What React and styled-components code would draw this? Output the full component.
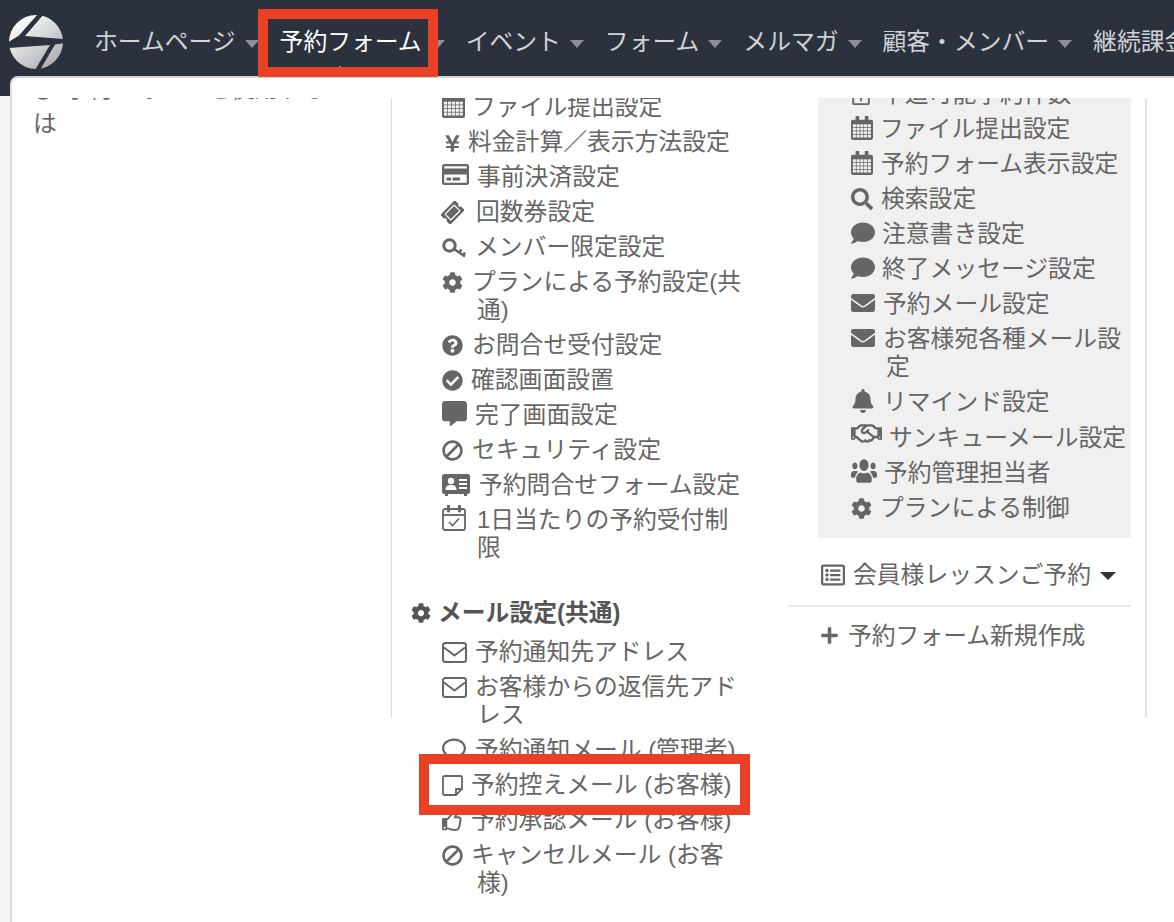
import React from "react";
import styled, { createGlobalStyle } from "styled-components";
import {
  FaYenSign, FaRegCreditCard, FaTicketAlt, FaCog, FaQuestionCircle, FaCheckCircle,
  FaCommentAlt, FaBan, FaRegComment,
  FaRegThumbsUp, FaSearch, FaComment, FaEnvelope, FaBell,
  FaRegHandshake, FaUsers, FaRegListAlt, FaPlus, FaRegCalendarPlus, FaRegDotCircle,
} from "react-icons/fa";

const Global = createGlobalStyle`
  html, body { margin: 0; padding: 0; background: #f5f5f5; }
  * { box-sizing: border-box; }
  body { font-family: "Liberation Sans", "Noto Sans CJK JP", sans-serif; }
`;

const Page = styled.div`
  position: relative;
  width: 1174px;
  height: 922px;
  overflow: hidden;
  font-size: 23.8px;
  color: #666;
`;

const Header = styled.header`
  display: flex;
  align-items: flex-start;
  height: 96px;
  padding: 15px 0 0 9px;
  background: #2b323e;
  overflow: hidden;
`;

const Nav = styled.nav`
  display: flex;
  align-items: center;
  height: 54px;
  margin-left: 31px;
  white-space: nowrap;
`;

const NavItem = styled.div`
  display: flex;
  align-items: center;
  flex: none;
  padding-right: 21px;
  line-height: 28px;
  color: ${(p) => (p.$active ? "#ffffff" : "#cfd2d6")};
`;

const Caret = styled.span`
  width: 0;
  height: 0;
  margin: 3px 0 0 9px;
  border-left: 7.5px solid transparent;
  border-right: 7.5px solid transparent;
  border-top: 8px solid #8b8f96;
`;

const Panel = styled.div`
  position: absolute;
  top: 76px;
  left: 10px;
  right: 0;
  bottom: 0;
  display: flex;
  padding-top: 20px;
  background: #fff;
  border-top: 2px solid #d4d5d7;
  border-left: 2px solid #dcdcdc;
  border-top-left-radius: 8px;

  &::before {
    content: "";
    position: absolute;
    top: -12px;
    left: 317px;
    border-left: 11px solid transparent;
    border-right: 11px solid transparent;
    border-bottom: 11px solid #fff;
  }
`;

const Columns = styled.div`
  flex: 1;
  display: flex;
  align-items: flex-start;
  overflow: hidden;
  height: 824px;
`;

const LeftColumn = styled.div`
  flex: none;
  width: 380px;
  height: 620px;
  padding: 0 25px 0 21px;
  border-right: 1px solid #dedede;
`;

const GuideText = styled.div`
  margin-top: -25px;
  line-height: 32px;
`;

const GuideIcon = styled.span`
  display: inline-block;
  width: 32px;
  vertical-align: -3px;
`;

const MiddleColumn = styled.div`
  flex: none;
  width: 396px;
  padding: 0 43px 0 19px;
`;

const RowList = styled.div`
  margin-top: ${(p) => p.$top || 0}px;
  padding-left: ${(p) => p.$left || 0}px;
`;

const Row = styled.div`
  margin-bottom: 7px;
  padding-left: 35px;
  text-indent: -35px;
  line-height: 28px;
`;

const IconSlot = styled.span`
  display: inline-flex;
  align-items: center;
  width: ${(p) => p.$w}px;
  height: 20px;
  text-indent: 0;
  vertical-align: -3px;
  color: #666;
`;

const MailHeading = styled.div`
  display: flex;
  align-items: center;
  margin: 37px 0 11px;
  font-weight: 700;
  line-height: 28px;
  color: #555;
`;

const HeadingIcon = styled.span`
  display: flex;
  width: 27px;
`;

const RightColumn = styled.div`
  flex: none;
  width: 359px;
  height: 620px;
  padding-right: 14px;
  border-right: 2px solid #e4e4e4;
`;

const SettingsBox = styled.div`
  margin-left: 30px;
  padding: 0 0 9px 33px;
  background: #f0f0f0;
  overflow: hidden;
`;

const ActionRow = styled.div`
  display: flex;
  align-items: center;
  line-height: 28px;
  padding-left: ${(p) => p.$left}px;
  margin-top: ${(p) => p.$top}px;
`;

const ActionIcon = styled.span`
  display: flex;
  width: ${(p) => p.$w}px;
`;

const DarkCaret = styled.span`
  width: 0;
  height: 0;
  margin: 3px 0 0 9px;
  border-left: 8px solid transparent;
  border-right: 8px solid transparent;
  border-top: 8px solid #333;
`;

const Divider = styled.hr`
  height: 2px;
  margin: 16px 0 0;
  border: 0;
  background: #e6e6e6;
`;

const Highlight = styled.div`
  position: absolute;
  left: ${(p) => p.$x}px;
  top: ${(p) => p.$y}px;
  width: ${(p) => p.$w}px;
  height: ${(p) => p.$h}px;
  border: 10px solid #e94026;
  pointer-events: none;
`;

const Logo = () => (
  <svg width="54" height="54" viewBox="0 0 54 54" style={{ flex: "none" }}>
    <defs>
      <linearGradient id="lg" x1="0.15" y1="0.1" x2="0.85" y2="0.95">
        <stop offset="0" stopColor="#ffffff" />
        <stop offset="1" stopColor="#a9abae" />
      </linearGradient>
    </defs>
    <circle cx="27" cy="27" r="27" fill="url(#lg)" />
    <polygon
      fill="#2b323e"
      points="29,-1 35,-1 16,21 55,24 55,28 46,29.5 31,55 26,55 41,30 -1,33 -1,27.5 10,20.5"
    />
  </svg>
);

const Calendar = ({ size = 24 }) => (
  <svg width={size} height={size + 2} viewBox="0 0 24 26" style={{ flex: "none" }}>
    <path fill="#666" d="M5 1a2 2 0 0 1 4 0v3h6V1a2 2 0 0 1 4 0v3h3a2 2 0 0 1 2 2v18a2 2 0 0 1-2 2H2a2 2 0 0 1-2-2V6a2 2 0 0 1 2-2h3z" />
    <g fill="#f3f3f3">
      {[0, 1, 2, 3].map((r) =>
        [0, 1, 2, 3, 4].map((c) => (
          <rect key={`${r}${c}`} x={2 + c * 4.1} y={9 + r * 3.8} width="3.3" height="3" />
        ))
      )}
    </g>
  </svg>
);

const CalendarCheck = () => (
  <svg width="24" height="26" viewBox="0 0 24 26" style={{ flex: "none" }}>
    <rect x="1" y="4" width="22" height="21" rx="2" fill="none" stroke="#666" strokeWidth="1.8" />
    <path d="M1 10h22" stroke="#666" strokeWidth="1.8" />
    <path d="M6.5 1v5M17.5 1v5" stroke="#666" strokeWidth="3" strokeLinecap="round" />
    <path d="M7 17l3.5 3.5L17 13.5" fill="none" stroke="#666" strokeWidth="1.6" />
  </svg>
);

const StickyNote = () => (
  <svg width="21" height="21" viewBox="0 0 21 21" style={{ flex: "none" }}>
    <path d="M2.5 1h16a1.5 1.5 0 0 1 1.5 1.5V14l-6 6H2.5A1.5 1.5 0 0 1 1 18.5v-16A1.5 1.5 0 0 1 2.5 1z" fill="none" stroke="#666" strokeWidth="1.8" />
    <path d="M14 20v-6h6" fill="none" stroke="#666" strokeWidth="1.8" />
  </svg>
);

const IdCard = () => (
  <svg width="28" height="22" viewBox="0 0 28 22" style={{ flex: "none" }}>
    <rect width="28" height="20" y="0" rx="2.5" fill="#666" />
    <path d="M3 20h3v2H3zM22 20h3v2h-3z" fill="#666" />
    <circle cx="9" cy="7" r="3.2" fill="#fff" />
    <path d="M3.5 16c0-4 2-5 5.5-5s5.5 1 5.5 5z" fill="#fff" />
    <path d="M17 6h8M17 10h8M17 14h8" stroke="#fff" strokeWidth="2" />
  </svg>
);

const Key = () => (
  <svg width="25" height="20" viewBox="0 0 25 20" style={{ flex: "none" }}>
    <circle cx="7.5" cy="7.5" r="5.7" fill="none" stroke="#666" strokeWidth="3" />
    <path d="M12 11l11 7.5M17 15l2.5-3.5M21 17.5l2-3" fill="none" stroke="#666" strokeWidth="2.6" />
  </svg>
);

const Ticket = () => (
  <FaTicketAlt size={21} style={{ flex: "none", transform: "rotate(-45deg)" }} />
);

const Yen = () => (
  <FaYenSign size={19} style={{ flex: "none", transform: "scaleX(1.1)", transformOrigin: "left" }} />
);

const Envelope = () => (
  <svg width="25" height="21" viewBox="0 0 25 21" style={{ flex: "none" }}>
    <rect x="1" y="1" width="23" height="19" rx="2.5" fill="none" stroke="#666" strokeWidth="2" />
    <path d="M2 5.5l10.5 8 10.5-8" fill="none" stroke="#666" strokeWidth="2" />
  </svg>
);

const Ban = () => (
  <FaBan size={21} style={{ flex: "none", transform: "scaleX(-1)" }} />
);

const Users = () => (
  <FaUsers size={26} style={{ flex: "none", transform: "scaleY(1.3)" }} />
);

const nav = [
  ["ホームページ"],
  ["予約フォーム", true],
  ["イベント"],
  ["フォーム"],
  ["メルマガ"],
  ["顧客・メンバー"],
  ["継続課金"],
];

const middleTop = [
  [<Calendar size={23} />, 30, "ファイル提出設定"],
  [<Yen />, 26, "料金計算／表示方法設定"],
  [<FaRegCreditCard size={27} />, 35, "事前決済設定"],
  [<Ticket />, 34, "回数券設定"],
  [<Key />, 33, "メンバー限定設定"],
  [<FaCog size={21} />, 30, "プランによる予約設定(共通)"],
  [<FaQuestionCircle size={21} />, 30, "お問合せ受付設定"],
  [<FaCheckCircle size={21} />, 29, "確認画面設置"],
  [<FaCommentAlt size={25} />, 33, "完了画面設定"],
  [<Ban />, 30, "セキュリティ設定"],
  [<IdCard />, 37, "予約問合せフォーム設定"],
  [<CalendarCheck />, 35, "1日当たりの予約受付制限"],
];

const middleMail = [
  [<Envelope />, 33, "予約通知先アドレス"],
  [<Envelope />, 33, "お客様からの返信先アドレス"],
  [<FaRegComment size={24} />, 33, "予約通知メール (管理者)"],
  [<StickyNote />, 29, "予約控えメール (お客様)"],
  [<FaRegThumbsUp size={21} />, 29, "予約承認メール (お客様)"],
  [<Ban />, 29, "キャンセルメール (お客様)"],
];

const right = [
  [<FaRegCalendarPlus size={20} />, 30, "半追可能予約件数"],
  [<Calendar size={22} />, 29, "ファイル提出設定"],
  [<Calendar size={22} />, 30, "予約フォーム表示設定"],
  [<FaSearch size={22} />, 30, "検索設定"],
  [<FaComment size={24} />, 31, "注意書き設定"],
  [<FaComment size={24} />, 31, "終了メッセージ設定"],
  [<FaEnvelope size={24} />, 32, "予約メール設定"],
  [<FaEnvelope size={24} />, 32, "お客様宛各種メール設定"],
  [<FaBell size={24} />, 32, "リマインド設定"],
  [<FaRegHandshake size={31} />, 38, "サンキューメール設定"],
  [<Users />, 33, "予約管理担当者"],
  [<FaCog size={21} />, 29, "プランによる制御"],
];

const Rows = ({ items }) =>
  items.map(([icon, w, label]) => (
    <Row key={label}>
      <IconSlot $w={w}>{icon}</IconSlot>
      {label}
    </Row>
  ));

export default function App() {
  return (
    <Page>
      <Global />
      <Header>
        <Logo />
        <Nav>
          {nav.map(([label, active]) => (
            <NavItem key={label} $active={active}>
              {label}
              <Caret />
            </NavItem>
          ))}
        </Nav>
      </Header>
      <Panel>
        <Columns>
          <LeftColumn>
            <GuideText>
              <GuideIcon>
                <FaRegDotCircle size={20} />
              </GuideIcon>
              予約フォームを使用するには
            </GuideText>
          </LeftColumn>
          <MiddleColumn>
            <RowList $top={-5} $left={31}>
              <Rows items={middleTop} />
            </RowList>
            <MailHeading>
              <HeadingIcon>
                <FaCog size={20} />
              </HeadingIcon>
              メール設定(共通)
            </MailHeading>
            <RowList $left={31}>
              <Rows items={middleMail} />
            </RowList>
          </MiddleColumn>
          <RightColumn>
            <SettingsBox>
              <RowList $top={-18}>
                <Rows items={right} />
              </RowList>
            </SettingsBox>
            <ActionRow $left={33} $top={23}>
              <ActionIcon $w={32}>
                <FaRegListAlt size={24} />
              </ActionIcon>
              会員様レッスンご予約
              <DarkCaret />
            </ActionRow>
            <Divider />
            <ActionRow $left={32} $top={15}>
              <ActionIcon $w={28}>
                <FaPlus size={19} />
              </ActionIcon>
              予約フォーム新規作成
            </ActionRow>
          </RightColumn>
        </Columns>
      </Panel>
      <Highlight $x={258} $y={9} $w={180} $h={68} />
      <Highlight $x={419} $y={754} $w={331} $h={61} />
    </Page>
  );
}
